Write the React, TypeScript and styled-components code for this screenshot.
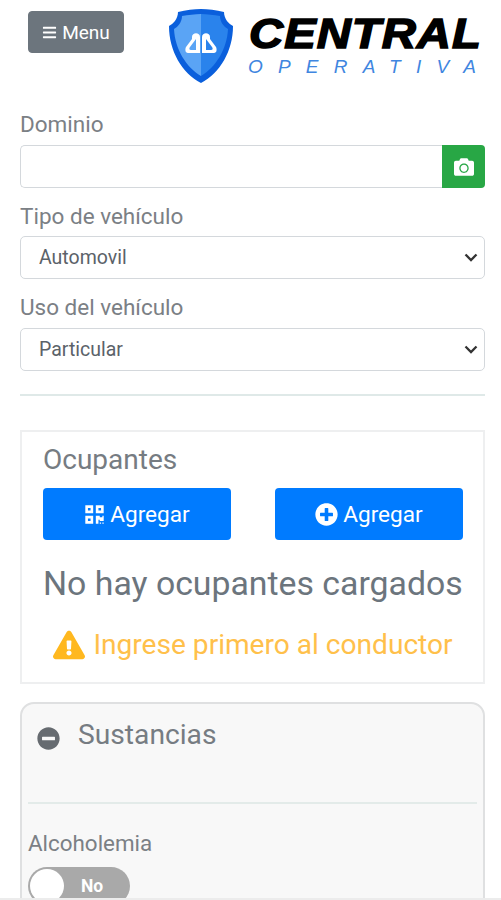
import React from "react";
import styled, { createGlobalStyle } from "styled-components";
import { FaBars, FaCamera, FaQrcode, FaPlusCircle, FaExclamationTriangle, FaMinusCircle } from "react-icons/fa";

const Global = createGlobalStyle`
  html, body { margin: 0; padding: 0; background: #fff; height: 900px; overflow: hidden; }
  body { font-family: Roboto, "Liberation Sans", sans-serif; color: #6c757d; }
  #root { height: 900px; overflow: hidden; }
  * { box-sizing: border-box; }
`;

const Page = styled.div`
  position: relative;
  width: 501px;
  height: 900px;
  overflow: hidden;
  padding: 0 16px 0 20px;
`;

const BottomEdge = styled.div`
  position: absolute;
  left: 0;
  right: 0;
  bottom: 0;
  height: 2px;
  background: #ececec;
`;

const Header = styled.header`
  display: flex;
  align-items: flex-start;
  height: 106px;
  padding: 9px 0 0 8px;
`;

const MenuButton = styled.button`
  display: flex;
  flex: none;
  align-items: center;
  justify-content: center;
  gap: 5px;
  width: 96px;
  height: 42px;
  margin-top: 2px;
  border: 1px solid #6c757d;
  border-radius: 4px;
  background: #6c757d;
  color: #fff;
  font: 400 19px Roboto, sans-serif;
  padding: 0;
`;

const Logo = styled.div`
  display: flex;
  flex: none;
  align-items: flex-start;
  margin-left: 44px;
`;

const Wordmark = styled.div`
  display: flex;
  flex-direction: column;
  margin-left: 14px;
  padding-top: 6px;
`;

const Central = styled.div`
  font: italic 700 42px/38px "Liberation Sans", Arial, sans-serif;
  letter-spacing: 0.9px;
  color: #000;
  -webkit-text-stroke: 1.5px #000;
  white-space: nowrap;
  margin-left: 1px;
  transform: scaleX(1.125);
  transform-origin: left center;
`;

const Operativa = styled.div`
  font: italic 400 19px/20px "Liberation Sans", Arial, sans-serif;
  letter-spacing: 15.2px;
  color: #3f86e0;
  white-space: nowrap;
  margin-top: 4px;
`;

const Label = styled.label`
  display: block;
  font-size: 22.5px;
  line-height: 30px;
  color: #7b8085;
`;

const Field = styled.div`
  margin-bottom: 13px;
`;

const DominioField = styled(Field)`
  margin-top: 3px;
`;

const InputRow = styled.div`
  display: flex;
  width: 465px;
  margin-top: 6px;
`;

const Input = styled.input`
  flex: 1;
  min-width: 0;
  height: 43px;
  border: 1.5px solid #d4d8dc;
  border-right: 0;
  border-radius: 5px 0 0 5px;
  background: #fff;
  padding: 0 18px;
`;

const CameraButton = styled.button`
  display: flex;
  align-items: center;
  justify-content: center;
  width: 43px;
  height: 43px;
  padding: 0;
  border: 0;
  border-radius: 0 4px 4px 0;
  background: #28a745;
  color: #fff;
  font-size: 20px;
`;

const chevron =
  "data:image/svg+xml,%3Csvg xmlns='http://www.w3.org/2000/svg' width='14' height='9' viewBox='0 0 14 9'%3E%3Cpath d='M1.5 1.5 7 7l5.5-5.5' fill='none' stroke='%23333' stroke-width='2.3'/%3E%3C/svg%3E";

const Select = styled.select<{ $gap: number }>`
  display: block;
  width: 465px;
  height: 43px;
  margin-top: ${(p) => p.$gap}px;
  padding: 0 30px 0 18px;
  border: 1.5px solid #d4d8dc;
  border-radius: 5px;
  appearance: none;
  background: #fff url("${chevron}") no-repeat right 6px center;
  color: #5b6269;
  font: 400 19.5px Roboto, sans-serif;
`;

const Rule = styled.hr`
  width: 465px;
  height: 2px;
  margin: 23px 0 34px;
  border: 0;
  background: #dfe9e8;
`;

const OccupantsBox = styled.section`
  width: 465px;
  height: 254px;
  border: 2px solid #eeeff0;
  padding: 10px 20px 0 21px;
`;

const BoxTitle = styled.h2`
  margin: 0;
  font-size: 28px;
  font-weight: 400;
  line-height: 36px;
  color: #767c82;
`;

const ButtonRow = styled.div`
  display: flex;
  justify-content: space-between;
  margin-top: 10px;
`;

const AddButton = styled.button`
  display: flex;
  align-items: center;
  justify-content: center;
  gap: 5px;
  width: 188px;
  height: 52px;
  padding: 0;
  border: 0;
  border-radius: 4px;
  background: #007bff;
  color: #fff;
  font: 400 22.6px Roboto, sans-serif;
`;

const EmptyText = styled.div`
  margin-top: 23px;
  font-size: 33.8px;
  line-height: 42px;
  color: #6c757d;
  white-space: nowrap;
`;

const Warning = styled.div`
  display: flex;
  align-items: center;
  justify-content: center;
  gap: 8px;
  margin-top: 22px;
  font-size: 28.1px;
  line-height: 36px;
  color: #ffc04a;
  white-space: nowrap;
`;

const WarningIcon = styled(FaExclamationTriangle)`
  color: #ffb81f;
  font-size: 32px;
`;

const SubstancesCard = styled.section`
  width: 465px;
  height: 240px;
  margin-top: 18px;
  border: 2px solid #dfe0e1;
  border-radius: 14px;
  background: #f8f8f8;
  padding: 0 6px;
`;

const CardHead = styled.div`
  display: flex;
  align-items: flex-start;
  gap: 18px;
  height: 100px;
  padding: 13px 9px 0;
  border-bottom: 2px solid #e3ebe9;
  margin: 0;
`;

const CollapseIcon = styled(FaMinusCircle)`
  margin-top: 10px;
  flex: none;
  font-size: 23px;
  color: #666b70;
`;

const CardTitle = styled.h3`
  margin: 0;
  font-size: 28.2px;
  font-weight: 400;
  line-height: 36px;
  color: #767c82;
`;

const ToggleLabel = styled.div`
  margin-top: 24px;
  font-size: 22.4px;
  line-height: 30px;
  color: #7b8085;
`;

const Toggle = styled.div`
  display: flex;
  align-items: center;
  width: 102px;
  height: 38px;
  margin-top: 9px;
  border-radius: 19px;
  background: #a9a9a9;
  padding-left: 2px;
`;

const Knob = styled.span`
  flex: none;
  width: 34px;
  height: 34px;
  border-radius: 50%;
  background: #fff;
`;

const ToggleText = styled.span`
  flex: 1;
  padding-right: 10px;
  text-align: center;
  font-size: 17.5px;
  font-weight: 700;
  color: #fff;
`;

function Shield() {
  return (
    <svg width="66" height="75" viewBox="0 0 66 75" aria-hidden="true">
      <path d="M10 3 C18 1 26 0 33 0 C40 0 48 1 56 3 C56 10 61 15 65 17 C65 42 52 64 33 74 C14 64 1 42 1 17 C5 15 10 10 10 3 Z" fill="#0a5fdc" />
      <path d="M14 7 C20 6 27 5 33 5 L33 67 C18 58 7 40 6 20 C10 18 14 13 14 7 Z" fill="#5aa4f5" />
      <path d="M52 7 C46 6 39 5 33 5 L33 67 C48 58 59 40 60 20 C56 18 52 13 52 7 Z" fill="#2a83ec" />
      <path d="M32 44 L32 28 C32 23 24 23 24 28 L24 30 L18 38 C17 40 17 44 20 44 Z M28 30 L28 41 L23 41 C21 41 21 39 22 38 Z" fill="#fff" fillRule="evenodd" />
      <path d="M34 44 L34 28 C34 23 42 23 42 28 L42 30 L48 38 C49 40 49 44 46 44 Z M38 30 L38 41 L43 41 C45 41 45 39 44 38 Z" fill="#fff" fillRule="evenodd" />
    </svg>
  );
}

export default function App() {
  return (
    <Page>
      <Global />
      <Header>
        <MenuButton><FaBars size={15} />Menu</MenuButton>
        <Logo>
          <Shield />
          <Wordmark>
            <Central>CENTRAL</Central>
            <Operativa>OPERATIVA</Operativa>
          </Wordmark>
        </Logo>
      </Header>
      <DominioField>
        <Label>Dominio</Label>
        <InputRow>
          <Input />
          <CameraButton aria-label="Foto"><FaCamera /></CameraButton>
        </InputRow>
      </DominioField>
      <Field>
        <Label>Tipo de vehículo</Label>
        <Select $gap={5} defaultValue="Automovil"><option>Automovil</option></Select>
      </Field>
      <Field>
        <Label>Uso del vehículo</Label>
        <Select $gap={6} defaultValue="Particular"><option>Particular</option></Select>
      </Field>
      <Rule />
      <OccupantsBox>
        <BoxTitle>Ocupantes</BoxTitle>
        <ButtonRow>
          <AddButton><FaQrcode size={21} />Agregar</AddButton>
          <AddButton><FaPlusCircle size={23} />Agregar</AddButton>
        </ButtonRow>
        <EmptyText>No hay ocupantes cargados</EmptyText>
        <Warning><WarningIcon />Ingrese primero al conductor</Warning>
      </OccupantsBox>
      <SubstancesCard>
        <CardHead>
          <CollapseIcon />
          <CardTitle>Sustancias</CardTitle>
        </CardHead>
        <ToggleLabel>Alcoholemia</ToggleLabel>
        <Toggle><Knob /><ToggleText>No</ToggleText></Toggle>
      </SubstancesCard>
      <BottomEdge />
    </Page>
  );
}
